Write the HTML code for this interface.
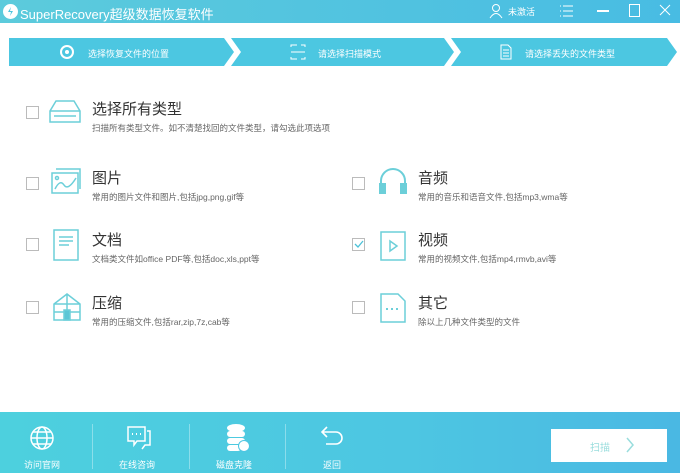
<!DOCTYPE html><html><head><meta charset="utf-8"><style>
body{margin:0;width:680px;height:473px;overflow:hidden;background:#fff;font-family:"Liberation Sans","Noto Sans CJK SC",sans-serif;position:relative}
.t{position:absolute;white-space:nowrap}
.title{position:absolute;left:0;top:0;width:680px;height:23px;background:linear-gradient(90deg,#5ccbdc,#48bce3);color:#fff}
.step{position:absolute;top:38px;height:28px;background:#4ac5e0;color:#fff;font-size:9px}
.cb{position:absolute;width:11px;height:11px;border:1px solid #bbb;background:#fff}
.h{font-size:15px;color:#333}
.d{font-size:8.5px;color:#666}
.bot{position:absolute;left:0;top:412px;width:680px;height:61px;background:linear-gradient(90deg,#4dd0de,#4dc6e2 60%,#4ab8e3);color:#fff;font-size:9px}
.sep{position:absolute;top:12px;width:1px;height:45px;background:rgba(255,255,255,.35)}
</style></head><body>
<div class="title">
<svg class="t" style="left:2px;top:3px" width="17" height="17"><circle cx="8.5" cy="8.5" r="7.5" fill="#fff"/><path d="M9 4 L6 9 H9 L8 13 L11 8 H8Z" fill="#4ec4de"/></svg>
<div class="t" style="left:20px;top:4px;font-size:13px">SuperRecovery超级数据恢复软件</div>
<svg class="t" style="left:489px;top:3px" width="14" height="16" fill="none" stroke="#fff"><circle cx="7" cy="5" r="3.5"/><path d="M1 15 Q7 6 13 15"/></svg>
<div class="t" style="left:508px;top:5px;font-size:9px">未激活</div>
<svg class="t" style="left:560px;top:5px" width="14" height="12" stroke="#fff"><path d="M3 1h10M3 6h10M3 11h10M0 1h1M0 6h1M0 11h1"/></svg>
<div class="t" style="left:597px;top:10px;width:12px;height:1.5px;background:#fff"></div>
<div class="t" style="left:629px;top:4px;width:9px;height:11px;border:1px solid #fff"></div>
<svg class="t" style="left:659px;top:4px" width="12" height="12" stroke="#fff"><path d="M1 1L11 11M11 1L1 11"/></svg>
</div>
<svg class="t" style="left:9px;top:38px" width="668" height="28"><path d="M0 0H215L225 14L215 28H0Z M222 0H435L445 14L435 28H222L232 14Z M442 0H658L668 14L658 28H442L452 14Z" fill="#4cc7e1"/>
<circle cx="58" cy="14" r="6" fill="none" stroke="#fff" stroke-width="2"/><circle cx="58" cy="14" r="2" fill="#fff"/>
<path d="M282 9V7H288M292 7H296V9M282 19V21H288M292 21H296V19M282 14H296" stroke="#fff" fill="none"/>
<path d="M492 7H499L502 10V21H492Z M494 12H500M494 15H500M494 18H500" stroke="#fff" fill="none"/></svg>
<div class="t" style="left:88px;top:47px;font-size:9px;color:#fff">选择恢复文件的位置</div>
<div class="t" style="left:318px;top:47px;font-size:9px;color:#fff">请选择扫描模式</div>
<div class="t" style="left:525px;top:47px;font-size:9px;color:#fff">请选择丢失的文件类型</div>

<div class="cb" style="left:26px;top:106px"></div>
<svg class="t" style="left:48px;top:99px" width="34" height="26" fill="none" stroke="#6ccfd9" stroke-width="1.5"><path d="M8 2H26L32 12V23H2V12Z M2 12H32 M6 17H28"/></svg>
<div class="t h" style="left:92px;top:98px">选择所有类型</div>
<div class="t d" style="left:92px;top:122px">扫描所有类型文件。如不清楚找回的文件类型，请勾选此项选项</div>

<div class="cb" style="left:26px;top:177px"></div>
<svg class="t" style="left:50px;top:165px" width="32" height="30" fill="none" stroke="#6ccfd9" stroke-width="1.5"><rect x="2" y="8" width="26" height="20"/><path d="M6 4H30V24"/><path d="M5 24 Q10 14 14 20 T26 13"/><circle cx="7" cy="13" r="1.5"/></svg>
<div class="t h" style="left:92px;top:167px">图片</div>
<div class="t d" style="left:92px;top:191px">常用的图片文件和图片,包括jpg,png,gif等</div>

<div class="cb" style="left:26px;top:238px"></div>
<svg class="t" style="left:52px;top:228px" width="28" height="34" fill="none" stroke="#6ccfd9" stroke-width="1.5"><rect x="2" y="2" width="24" height="30"/><path d="M7 9H21M7 13H21M7 17H17"/></svg>
<div class="t h" style="left:92px;top:229px">文档</div>
<div class="t d" style="left:92px;top:253px">文档类文件如office PDF等,包括doc,xls,ppt等</div>

<div class="cb" style="left:26px;top:301px"></div>
<svg class="t" style="left:52px;top:292px" width="30" height="30" fill="none" stroke="#6ccfd9" stroke-width="1.5"><path d="M15 2L2 12V28H28V12Z M2 12H28 M2 20H28 M15 2V28"/><rect x="12" y="18" width="6" height="10" fill="#5cc6d6"/></svg>
<div class="t h" style="left:92px;top:292px">压缩</div>
<div class="t d" style="left:92px;top:316px">常用的压缩文件,包括rar,zip,7z,cab等</div>

<div class="cb" style="left:352px;top:177px"></div>
<svg class="t" style="left:378px;top:167px" width="30" height="28" fill="none" stroke="#6ccfd9" stroke-width="2"><path d="M3 20V14A12 12 0 0 1 27 14V20"/><rect x="2" y="17" width="5" height="9" fill="#6ccfd9"/><rect x="23" y="17" width="5" height="9" fill="#6ccfd9"/></svg>
<div class="t h" style="left:418px;top:167px">音频</div>
<div class="t d" style="left:418px;top:191px">常用的音乐和语音文件,包括mp3,wma等</div>

<div class="cb" style="left:352px;top:238px"></div>
<svg class="t" style="left:354px;top:240px" width="10" height="9" fill="none" stroke="#4cc2d8" stroke-width="1.3"><path d="M1 4L4 7L9 1"/></svg>
<svg class="t" style="left:379px;top:230px" width="28" height="32" fill="none" stroke="#6ccfd9" stroke-width="1.5"><rect x="2" y="2" width="24" height="28"/><path d="M11 11L18 16L11 21Z"/></svg>
<div class="t h" style="left:418px;top:229px">视频</div>
<div class="t d" style="left:418px;top:253px">常用的视频文件,包括mp4,rmvb,avi等</div>

<div class="cb" style="left:352px;top:301px"></div>
<svg class="t" style="left:379px;top:292px" width="28" height="32" fill="none" stroke="#6ccfd9" stroke-width="1.5"><path d="M2 2H19L26 9V30H2Z"/><path d="M7 17h2M12 17h2M17 17h2" stroke-width="2"/></svg>
<div class="t h" style="left:418px;top:292px">其它</div>
<div class="t d" style="left:418px;top:316px">除以上几种文件类型的文件</div>

<div class="bot">
<svg class="t" style="left:29px;top:13px" width="26" height="26" fill="none" stroke="#fff" stroke-width="1.5"><circle cx="13" cy="13" r="11"/><ellipse cx="13" cy="13" rx="5" ry="11"/><path d="M2 13H24M4 7H22M4 19H22"/></svg>
<div class="t" style="left:24px;top:46px">访问官网</div>
<div class="sep" style="left:92px"></div>
<svg class="t" style="left:125px;top:12px" width="28" height="28" fill="none" stroke="#fff" stroke-width="1.5"><path d="M3 3H20V17H12L9 21V17H3Z M22 7H25V21H20L17 25"/><path d="M7 10h1M11 10h1M15 10h1" stroke-width="2"/></svg>
<div class="t" style="left:119px;top:46px">在线咨询</div>
<div class="sep" style="left:189px"></div>
<svg class="t" style="left:225px;top:11px" width="26" height="30" fill="#fff"><ellipse cx="11" cy="5" rx="9" ry="4"/><rect x="2" y="8" width="18" height="6" rx="3"/><rect x="2" y="15" width="18" height="6" rx="3"/><rect x="2" y="22" width="14" height="6" rx="3"/><circle cx="19" cy="23" r="5.5" fill="#fff" stroke="#4dc6e2"/></svg>
<div class="t" style="left:216px;top:46px">磁盘克隆</div>
<div class="sep" style="left:285px"></div>
<svg class="t" style="left:321px;top:14px" width="24" height="20" fill="none" stroke="#fff" stroke-width="1.6"><path d="M6 1L1 6L6 11M1 6H15A6 6 0 0 1 15 18H5"/></svg>
<div class="t" style="left:323px;top:46px">返回</div>
<div class="t" style="left:551px;top:17px;width:116px;height:33px;background:#fff"></div>
<div class="t" style="left:590px;top:27px;color:#9dd;font-size:10px">扫描</div>
<svg class="t" style="left:625px;top:25px" width="10" height="16" fill="none" stroke="#9dd" stroke-width="1.5"><path d="M2 1L8 8L2 15"/></svg>
</div>
</body></html>
